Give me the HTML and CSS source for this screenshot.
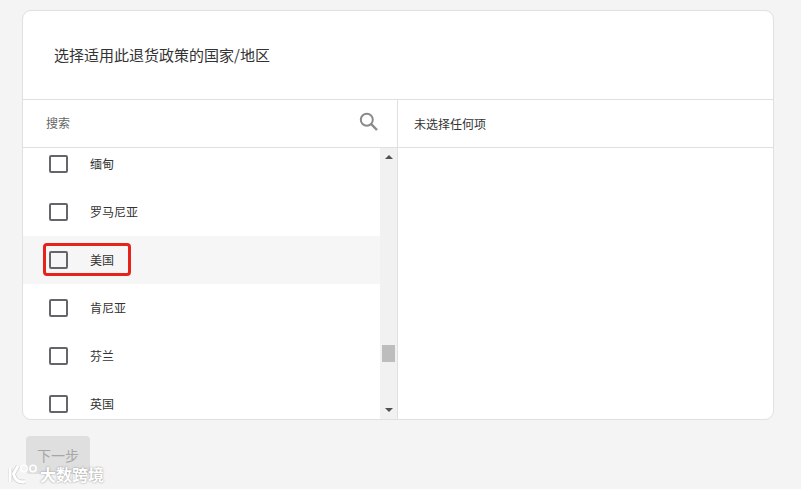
FILE: index.html
```html
<!DOCTYPE html>
<html lang="zh-CN">
<head>
<meta charset="utf-8">
<title>选择国家/地区</title>
<link rel="stylesheet" href="styles.css">
</head>
<body>
<main class="page">
  <section class="card">
    <h1 class="title">选择适用此退货政策的国家/地区</h1>
    <div class="panes">
      <div class="left">
        <div class="search">
          <span class="search-label">搜索</span>
          <svg class="search-icon" width="20" height="20" viewBox="0 0 20 20" aria-hidden="true">
            <circle cx="7.8" cy="7.8" r="6" fill="none" stroke="#8a8a8a" stroke-width="2"/>
            <path d="M12.2 12.2 L18 18" fill="none" stroke="#8a8a8a" stroke-width="2.4"/>
          </svg>
        </div>
        <div class="list-wrap">
          <ul class="list">
            <li class="row"><span class="box"></span><span class="label">缅甸</span></li>
            <li class="row"><span class="box"></span><span class="label">罗马尼亚</span></li>
            <li class="row row-hover"><span class="box"></span><span class="label">美国</span><span class="mark"></span></li>
            <li class="row"><span class="box"></span><span class="label">肯尼亚</span></li>
            <li class="row"><span class="box"></span><span class="label">芬兰</span></li>
            <li class="row"><span class="box"></span><span class="label">英国</span></li>
          </ul>
          <div class="scrollbar">
            <span class="arrow arrow-up"></span>
            <span class="thumb"></span>
            <span class="arrow arrow-down"></span>
          </div>
        </div>
      </div>
      <div class="right">
        <div class="selected-head">未选择任何项</div>
      </div>
    </div>
  </section>
  <button class="next" type="button" disabled>下一步</button>
</main>
<div class="watermark">
  <svg class="watermark-logo" width="32" height="22" viewBox="0 0 32 22" aria-hidden="true">
    <g fill="none" stroke="#b4b4b4" stroke-width="4.500" stroke-opacity=".6">
      <path d="M2 5 V19 M10 3 L5.500 11 C7 17 11 20 17 18.500"/>
    </g>
    <path d="M2 5 V19 M10 3 L5.500 11 C7 17 11 20 17 18.500" fill="none" stroke="#fff" stroke-width="3"/>
    <circle cx="16" cy="5.500" r="3.200" fill="none" stroke="#fff" stroke-width="1.500"/>
    <circle cx="25" cy="5.500" r="3.200" fill="none" stroke="#fff" stroke-width="1.500"/>
  </svg>
  <span class="watermark-text">大数跨境</span>
</div>
</body>
</html>
```
FILE: styles.css
```css
* { box-sizing: border-box; }
html, body { margin: 0; height: 100%; }
body {
  background: #f4f4f4;
  font-family: "Noto Sans CJK SC", "Liberation Sans", sans-serif;
  color: #333;
  overflow: hidden;
  position: relative;
}
.page { padding: 10px 27px 0 22px; }
.card {
  height: 410px;
  background: #fff;
  border: 1px solid #e0e0e0;
  border-radius: 9px;
  display: flex;
  flex-direction: column;
  overflow: hidden;
}
.title {
  margin: 0;
  height: 89px;
  flex: none;
  padding: 0 0 2px 31px;
  display: flex;
  align-items: center;
  font-size: 15px;
  font-weight: 400;
  color: #333;
  border-bottom: 1px solid #e0e0e0;
}
.panes { flex: 1; display: flex; min-height: 0; }
.left {
  width: 375px;
  flex: none;
  border-right: 1px solid #e0e0e0;
  display: flex;
  flex-direction: column;
  min-height: 0;
}
.search {
  height: 48px;
  flex: none;
  padding: 0 18px 2px 23px;
  display: flex;
  align-items: center;
  justify-content: space-between;
  border-bottom: 1px solid #e0e0e0;
}
.search-label { font-size: 12px; color: #666; }
.search-icon { margin-top: -1px; }
.list-wrap { flex: 1; display: flex; min-height: 0; overflow: hidden; }
.list {
  flex: 1;
  list-style: none;
  margin: -8px 0 0;
  padding: 0;
}
.row {
  height: 48px;
  display: flex;
  align-items: center;
  padding-left: 26px;
  position: relative;
}
.row-hover { background: #f6f6f6; }
.box {
  width: 19px;
  height: 18px;
  border: 2px solid #63676c;
  border-radius: 2px;
  background: #fff;
  flex: none;
}
.row-hover .box { background: transparent; }
.label { margin: -2px 0 0 22px; font-size: 12px; color: #333; }
.mark {
  position: absolute;
  left: 20px;
  top: 7px;
  width: 88px;
  height: 33px;
  border: 3px solid #e5231b;
  border-radius: 4px;
}
.scrollbar {
  width: 17px;
  flex: none;
  background: #f1f1f1;
  position: relative;
}
.arrow {
  position: absolute;
  left: 5px;
  width: 0;
  height: 0;
  border-left: 4px solid transparent;
  border-right: 4px solid transparent;
}
.arrow-up { top: 7px; border-bottom: 4px solid #505050; }
.arrow-down { bottom: 7px; border-top: 4px solid #505050; }
.thumb {
  position: absolute;
  left: 2px;
  top: 197px;
  width: 13px;
  height: 17px;
  background: #bdbdbd;
}
.right { flex: 1; }
.selected-head {
  height: 48px;
  padding-left: 16px;
  display: flex;
  align-items: center;
  font-size: 12px;
  color: #333;
  border-bottom: 1px solid #e0e0e0;
}
.next {
  display: block;
  margin: 16px 0 0 4px;
  width: 64px;
  height: 38px;
  border: 0;
  border-radius: 4px;
  background: #dfdfdf;
  color: #a6a6a6;
  font: inherit;
  font-size: 14px;
  padding: 0;
}
.watermark {
  position: absolute;
  left: 8px;
  top: 463px;
  display: flex;
  align-items: center;
  height: 22px;
}
.watermark-text {
  font-size: 16px;
  font-weight: 700;
  line-height: 22px;
  color: #fff;
  text-shadow: 0 0 2px rgba(110, 110, 110, .8);
}
```
